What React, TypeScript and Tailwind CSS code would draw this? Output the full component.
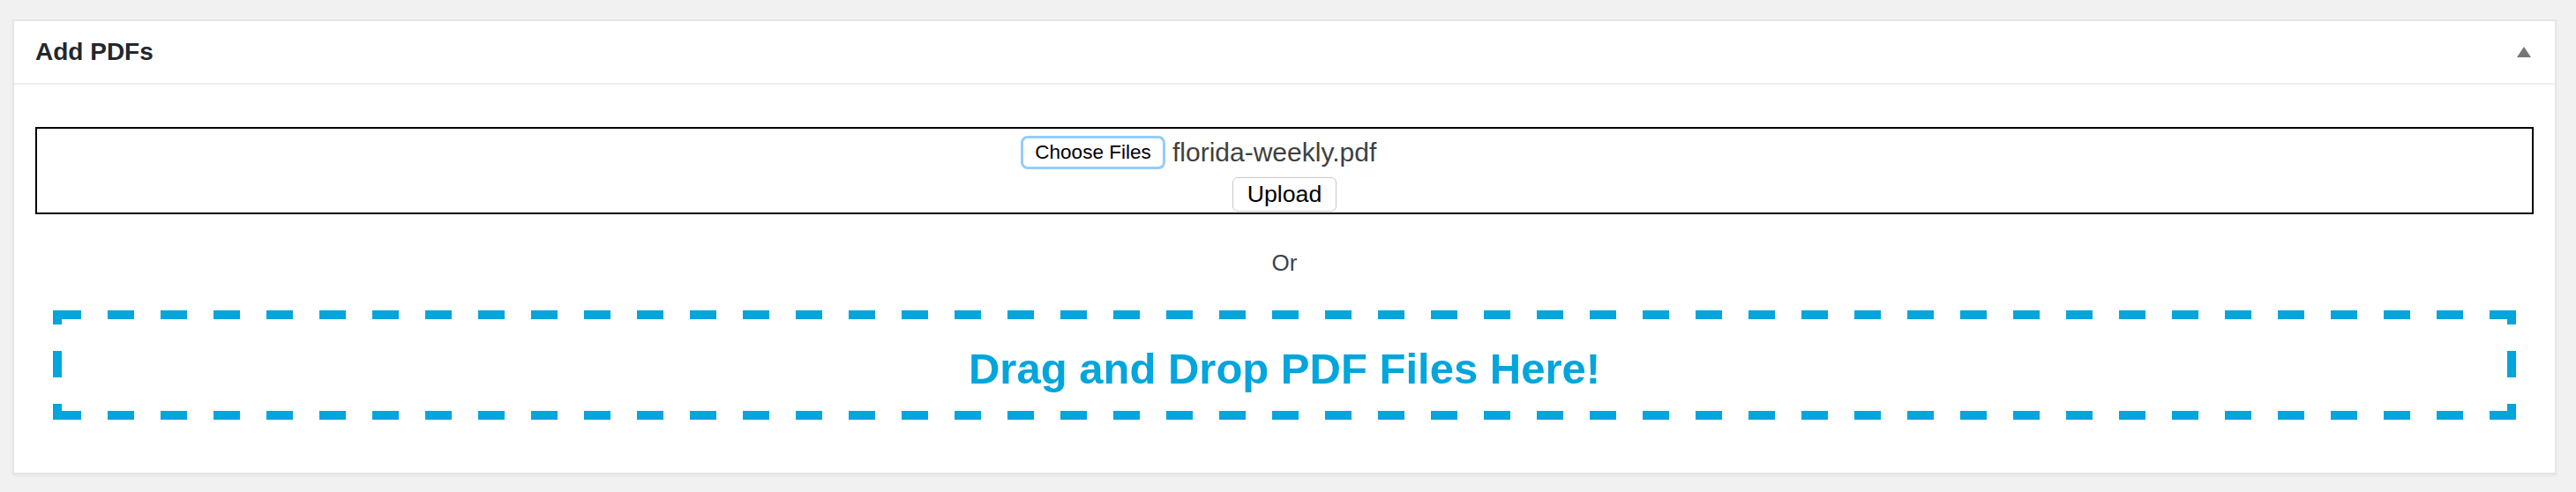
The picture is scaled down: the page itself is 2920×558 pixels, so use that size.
// ─── Add PDFs metabox ─────────────────────────────────────────────────────────

function CollapseArrow() {
  return (
    <svg width="16" height="12" viewBox="0 0 16 12" className="block">
      <polygon points="8,0 16,12 0,12" fill="#72777c" />
    </svg>
  );
}

function FileRow() {
  return (
    <div className="flex w-[598px] items-center">
      <button
        type="button"
        className="flex h-[38px] w-[164px] shrink-0 items-center justify-center rounded-[8px] border-[3px] border-[#94cdf8] bg-white font-['Liberation_Sans',Arial,sans-serif] text-[22.5px] text-black"
      >
        Choose Files
      </button>
      <span className="ml-[8px] whitespace-nowrap font-['Liberation_Sans',Arial,sans-serif] text-[30px] leading-none text-[#404040]">
        florida-weekly.pdf
      </span>
    </div>
  );
}

export default function App() {
  return (
    <div className="h-[558px] w-[2920px] overflow-hidden bg-[#f1f1f1] pt-[22px] pl-[14px]">
      <div className="w-[2884px] border-2 border-[#e5e5e5] bg-white shadow-[0_2px_2px_rgba(0,0,0,0.04)]">
        {/* header */}
        <div className="flex h-[72px] items-center justify-between border-b-2 border-[#eeeeee] pl-[24px] pr-[27px]">
          <h2 className="font-['Liberation_Sans',Arial,sans-serif] text-[28px] font-bold leading-none text-[#23282d]">
            Add PDFs
          </h2>
          <CollapseArrow />
        </div>

        {/* body */}
        <div className="px-[24px] pt-[48px] pb-[60px]">
          <div className="flex h-[99px] flex-col items-center border-2 border-black pt-[8px]">
            <FileRow />
            <button
              type="button"
              className="mt-[9px] flex h-[39px] w-[118px] items-center justify-center rounded-[6px] border border-[#c9c9c9] bg-white font-['Liberation_Sans',Arial,sans-serif] text-[26.7px] text-black"
            >
              Upload
            </button>
          </div>

          <div className="flex h-[109px] items-center justify-center pt-[2px] font-['Liberation_Sans',Arial,sans-serif] text-[26px] text-[#3c434a]">
            Or
          </div>

          {/* drop zone: dashes 30px on / 30px off, 10px thick */}
          <div className="mx-[20px] flex h-[124px] items-center justify-center bg-no-repeat pt-[8px] [background-image:repeating-linear-gradient(90deg,transparent_0_2px,#02a5dc_2px_32px,transparent_32px_60px),repeating-linear-gradient(90deg,transparent_0_2px,#02a5dc_2px_32px,transparent_32px_60px),linear-gradient(180deg,#02a5dc_0_16px,transparent_16px_46px,#02a5dc_46px_76px,transparent_76px_106px,#02a5dc_106px),linear-gradient(180deg,#02a5dc_0_16px,transparent_16px_46px,#02a5dc_46px_76px,transparent_76px_106px,#02a5dc_106px)] [background-position:left_top,left_bottom,left_top,right_top] [background-size:100%_10px,100%_10px,10px_100%,10px_100%]">
            <span className="font-['Liberation_Sans',Arial,sans-serif] text-[49px] font-bold leading-none text-[#02a5dc]">
              Drag and Drop PDF Files Here!
            </span>
          </div>
        </div>
      </div>
    </div>
  );
}
